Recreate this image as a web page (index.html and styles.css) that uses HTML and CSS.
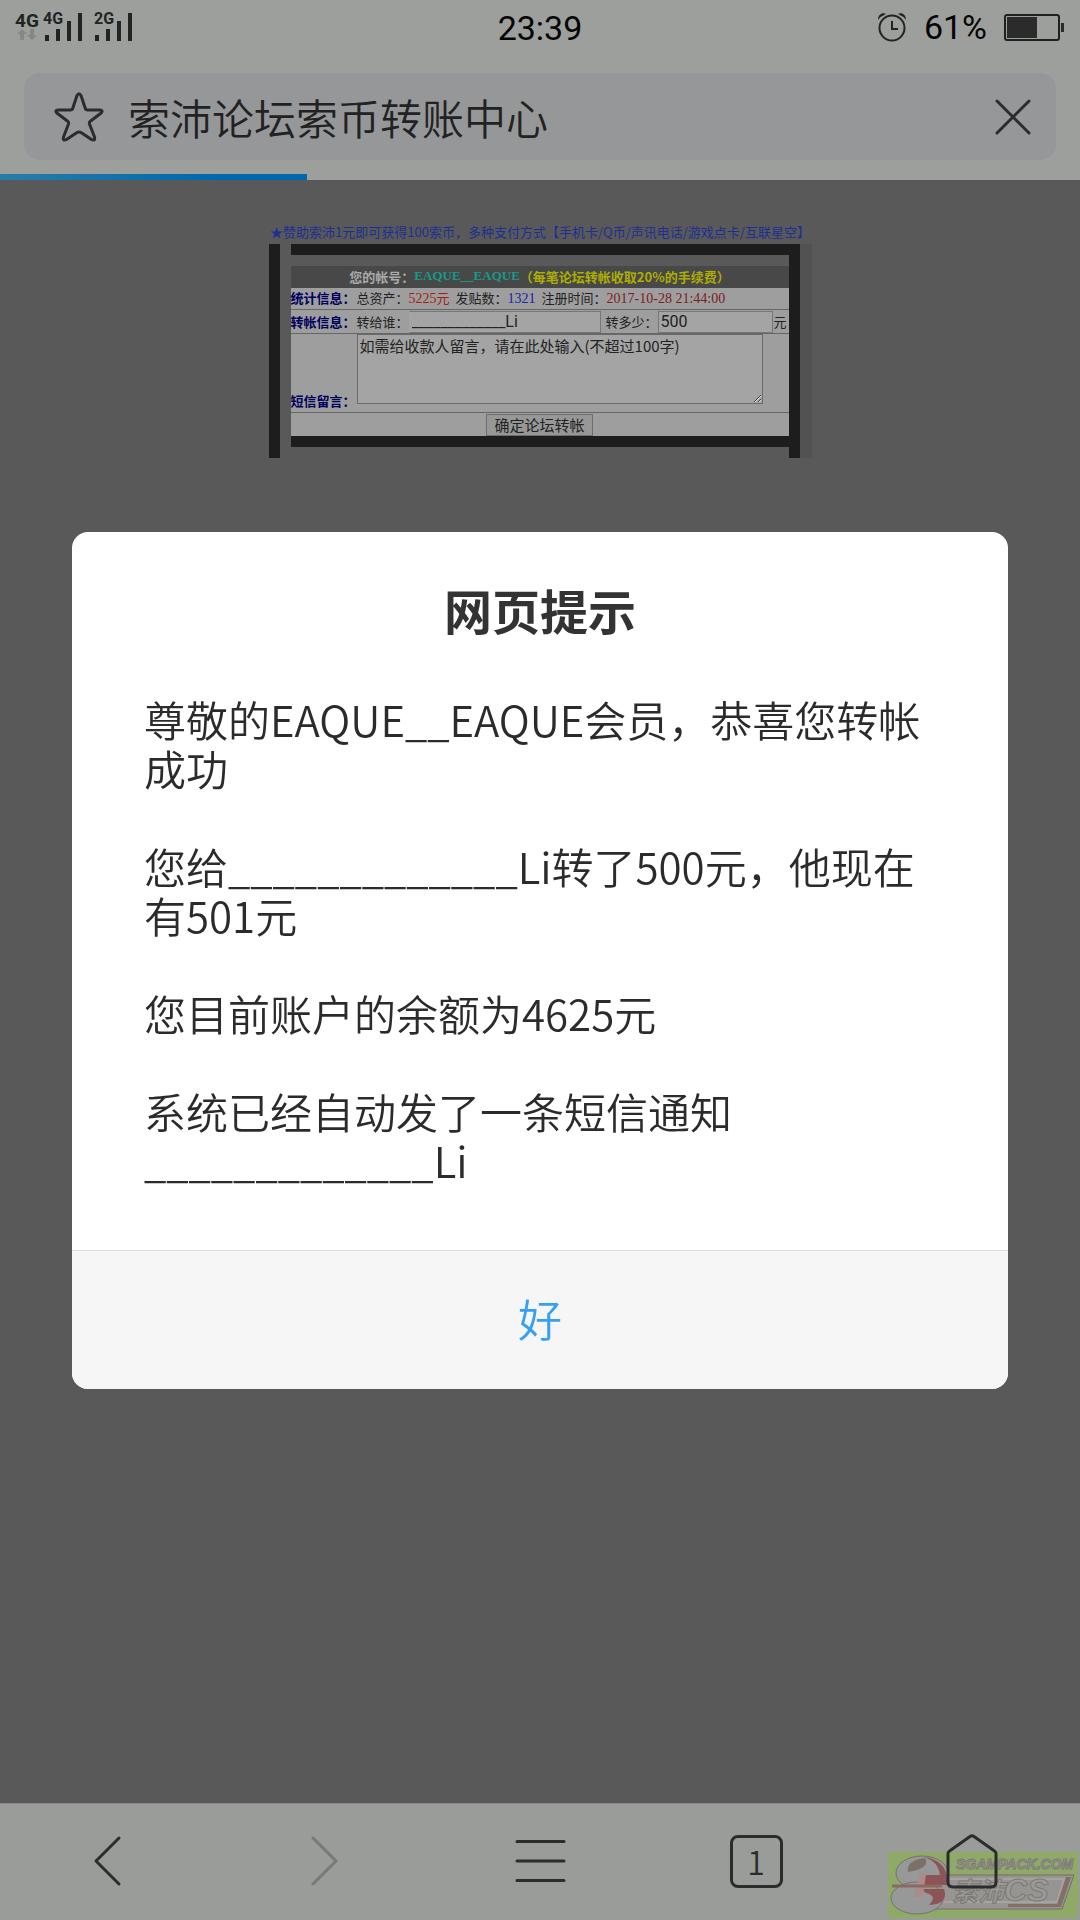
FILE: index.html
```html
<!DOCTYPE html>
<html lang="zh-CN">
<head>
<meta charset="utf-8">
<meta name="viewport" content="width=device-width, initial-scale=1">
<title>索沛论坛索币转账中心</title>
<link rel="stylesheet" href="styles.css">
</head>
<body>
<header class="top">
  <div class="status">
    <svg class="signal" width="120" height="32" viewBox="0 0 120 32" aria-label="信号">
      <g class="net">
        <text x="0" y="18" class="net-main">4G</text>
        <text x="28" y="15" class="net-sub">4G</text>
        <text x="79" y="15" class="net-sub">2G</text>
      </g>
      <path class="arrows" d="M7 20l5 5H9v6H5v-6H2zM17 31l5-5h-3v-6h-4v6h-3z"/>
      <path class="bars" d="M30 26h4v6h-4zM41 20h4v12h-4zM52 12h4v20h-4zM63 4h4v28h-4zM80 26h4v6h-4zM91 20h4v12h-4zM102 12h4v20h-4zM113 4h4v28h-4z"/>
    </svg>
    <time class="clock">23:39</time>
    <div class="power">
      <svg width="30" height="30" viewBox="0 0 30 30" aria-label="闹钟">
        <circle cx="15" cy="16" r="12.5" fill="none" stroke="#222423" stroke-width="2"/>
        <path d="M15 9v8h6" fill="none" stroke="#222423" stroke-width="2"/>
        <path d="M1 8C1 3 5 0 9 2Q4 4 1 8zM29 8C29 3 25 0 21 2Q26 4 29 8z" fill="#222423"/>
      </svg>
      <span class="percent">61%</span>
      <svg width="61" height="27" viewBox="0 0 61 27" aria-label="电量">
        <rect x="1" y="1" width="54" height="25" rx="2" fill="none" stroke="#1f2120" stroke-width="2"/>
        <path d="M3 3h30v21H3zM57 9h3v9h-3z" fill="#2b2b2b"/>
      </svg>
    </div>
  </div>
  <div class="address">
    <button class="icon-btn" aria-label="收藏">
      <svg width="50" height="50" viewBox="0 0 50 50"><path d="M23 3.500Q25 0 27 3.500L31.500 17Q32 18 33.500 18H46Q50 18.500 46.500 21.500L36 29.500Q35 30.500 35.500 32L40.500 45Q41.500 49.500 37.500 47.500L27 40.500Q25 39.500 23 40.500L12.500 47.500Q8.500 49.500 9.500 45L14.500 32Q15 30.500 14 29.500L3.500 21.500Q0 18.500 4 18H16.500Q18 18 18.500 17Z"/></svg>
    </button>
    <span class="page-title">索沛论坛索币转账中心</span>
    <button class="icon-btn" aria-label="停止">
      <svg width="38" height="38" viewBox="0 0 38 38"><path d="M3 3L35 35M35 3L3 35"/></svg>
    </button>
  </div>
  <div class="progress"><div class="progress-fill"></div></div>
</header>

<main class="page">
  <a class="promo" href="#">★赞助索沛1元即可获得100索币，多种支付方式【手机卡/Q币/声讯电话/游戏点卡/互联星空】</a>
  <div class="frame">
    <form class="panel">
      <div class="rule"></div>
      <div class="row heading">您的帐号：<span class="account">EAQUE__EAQUE</span><span class="fee">（每笔论坛转帐收取20%的手续费）</span></div>
      <div class="row stats">
        <b class="label">统计信息：</b>
        <span>总资产：<span class="num red">5225</span><span class="red">元</span></span>
        <span>发贴数：<span class="num blue">1321</span></span>
        <span>注册时间：<span class="num maroon">2017-10-28 21:44:00</span></span>
      </div>
      <div class="row">
        <b class="label">转帐信息：</b>
        <label for="to">转给谁：</label><input id="to" class="to" type="text" value="_____________Li">
        <label for="sum" class="sum-label">转多少：</label><input id="sum" class="sum" type="text" value="500"><span class="unit">元</span>
      </div>
      <div class="row message">
        <label class="label" for="msg">短信留言：</label><textarea id="msg">如需给收款人留言，请在此处输入(不超过100字)</textarea>
      </div>
      <div class="row submit"><button type="button" class="send">确定论坛转帐</button></div>
      <div class="rule"></div>
    </form>
  </div>
</main>

<nav class="toolbar">
  <button aria-label="后退"><svg width="54" height="56" viewBox="0 0 54 56"><path d="M38 5L15 28L38 51"/></svg></button>
  <button aria-label="前进" disabled><svg width="54" height="56" viewBox="0 0 54 56"><path d="M16 5L39 28L16 51"/></svg></button>
  <button aria-label="菜单"><svg width="54" height="56" viewBox="0 0 54 56"><path d="M4 8.500H51M4 28H51M4 47.500H51"/></svg></button>
  <button aria-label="标签页"><span class="tabs">1</span></button>
  <button class="home" aria-label="主页"><svg width="54" height="56" viewBox="0 0 54 56"><path d="M3 20.500Q3 19 4.500 18L25 3.500Q27 2 29 3.500L49.500 18Q51 19 51 20.500V49Q51 54 46 54H8Q3 54 3 49Z"/></svg></button>
</nav>

<svg class="watermark" width="190" height="66" viewBox="0 0 190 66" aria-hidden="true">
  <rect width="190" height="66" fill="#8fa968"/>
  <path d="M48 23H186L174 57H44Z" fill="#969593" stroke="#786c62"/>
  <path d="M52 27H176L169 50H56" fill="none" stroke="#a6a4a2" stroke-width="2"/>
  <path d="M178 25h5l-10 30H120v-3h49z" fill="#817065"/>
  <ellipse cx="34" cy="21" rx="26" ry="17" fill="#969997" stroke="#7a706b"/>
  <ellipse cx="29" cy="46" rx="26" ry="16" fill="#969997" stroke="#7a706b"/>
  <path d="M36 5Q60 8 60 33H34L38 23H52Q50 9 36 5ZM33 37H56Q61 52 41 53Q50 44 38 41Z" fill="#8c5454"/>
  <path d="M20 20Q18 8 37 6Q43 16 20 20Z" fill="#7d706b"/>
  <path d="M32 21H38L35 45H26Z" fill="#aa8b89"/>
  <path d="M4 34H54" stroke="#8c6866" stroke-width="3"/>
  <g class="mark">
    <text x="68" y="17" class="mark-url">SGAMPACK.COM</text>
    <text x="64" y="49" class="mark-name">索沛<tspan class="mark-cs">CS</tspan></text>
  </g>
</svg>

<div class="overlay">
  <section class="dialog" role="dialog" aria-modal="true" aria-labelledby="dlg-title">
    <div class="dialog-body">
      <h1 id="dlg-title">网页提示</h1>
      <p>尊敬的EAQUE<span class="pad">__</span>EAQUE会员，恭喜您转帐成功</p>
      <p>您给<span class="pad">_____________</span>Li转了500元，他现在有501元</p>
      <p>您目前账户的余额为4625元</p>
      <p>系统已经自动发了一条短信通知<br><span class="pad">_____________</span>Li</p>
    </div>
    <button class="ok">好</button>
  </section>
</div>
</body>
</html>
```
FILE: styles.css
```css
* { box-sizing: border-box; }

body {
  margin: 0;
  min-height: 100vh;
  display: flex;
  flex-direction: column;
  background: #595959;
  color: #2b2b2b;
  font-family: "Noto Sans CJK SC", "Noto Sans", sans-serif;
}

button, input, textarea { font: inherit; color: inherit; margin: 0; }
button { padding: 0; border: 0; background: none; display: grid; place-items: center; }

/* Status and address bars */
.top { background: #9d9f9d; }
.status {
  height: 73px;
  padding: 9px 15px 0;
  display: grid;
  grid-template-columns: 1fr auto 1fr;
  align-items: start;
}
.net { font-family: Roboto, sans-serif; font-weight: 700; fill: #222423; }
.net-main { font-size: 19px; }
.net-sub { font-size: 16px; }
.arrows { fill: #858785; }
.bars { fill: #222423; }
.clock, .percent { font: 34px/38px Roboto, sans-serif; color: #050505; }
.power { display: flex; justify-content: flex-end; align-items: center; gap: 17px; height: 36px; }

.address {
  height: 87px;
  margin: 0 24px;
  padding: 0 24px 0 30px;
  display: flex;
  align-items: center;
  gap: 24px;
  border-radius: 16px;
  background: #969799;
}
.icon-btn svg, .toolbar svg {
  fill: none;
  stroke: #2b2d2c;
  stroke-width: 3;
  stroke-linecap: round;
  stroke-linejoin: round;
}
.page-title { flex: 1; font-size: 42px; line-height: 60px; font-weight: 350; color: #222; }
.progress { height: 20px; padding-top: 14px; }
.progress-fill { width: 28.4%; height: 6px; background: linear-gradient(90deg, #2a7ca6, #0067ae 70%); }

/* Forum page */
.page {
  flex: 1;
  padding-top: 42px;
  display: flex;
  flex-direction: column;
  align-items: center;
  font-size: 13px;
  color: #222;
}
.promo {
  padding-bottom: 2px;
  line-height: 20px;
  color: #1f2f91;
  text-decoration: none;
  white-space: nowrap;
}
.frame {
  width: 543px;
  padding-right: 12px;
  background: #525252;
}
.panel {
  border: solid #1d1d1d;
  border-width: 0 11px;
  padding-left: 11px;
  background: #595959;
}
.rule { height: 11px; margin-bottom: 11px; background: #1d1d1d; }
.panel::after { content: ""; display: table; }
.row {
  height: 24px;
  display: flex;
  align-items: center;
  white-space: nowrap;
  background: #9e9e9e;
  border-bottom: 1px solid #666;
}
.row.heading {
  height: 22px;
  padding-bottom: 2px;
  border-bottom: 0;
  justify-content: center;
  font-weight: 700;
  color: #aaa;
  background: #484848;
}
.label { width: 66px; font-weight: 700; color: #00005c; }
.account { color: #159a8b; font-family: "Liberation Serif", serif; }
.fee { color: #aeae00; }
.num { font-family: "Liberation Serif", serif; font-size: 14px; }
.red { color: #a51a1a; }
.blue { color: #2020a0; }
.maroon { color: #7c2024; }
.row.stats { height: 22px; padding-bottom: 2px; gap: 6px; }
.stats .label { width: 60px; }
.row input {
  height: 22px;
  padding: 0 2px;
  border: 1px solid #777;
  background: #a4a4a4;
  font: 16px/20px Roboto, sans-serif;
}
.row .to { width: 192px; border-left-color: #a4a4a4; }
.sum-label { padding-left: 5px; }
.row .sum { width: 115px; }
.unit { padding-left: 1px; }
.row.message { height: 79px; align-items: flex-start; }
.message .label { align-self: flex-end; line-height: 22px; }
.message textarea {
  width: 406px;
  height: 70px;
  padding: 0 2px;
  border: 1px solid #6a6a6a;
  background: #a4a4a4;
  font-size: 15px;
  line-height: 22px;
}
.row.submit { height: 23px; justify-content: center; border-bottom: 0; }
.send {
  width: 107px;
  height: 22px;
  border: 1px solid #6e6e6e;
  background: #979797;
  font-size: 15px;
  line-height: 20px;
}

/* Bottom toolbar */
.toolbar {
  height: 117px;
  padding-bottom: 2px;
  display: grid;
  grid-template-columns: repeat(5, 1fr);
  background: #9a9c9a;
  border-top: 1px solid #868886;
}
.toolbar button:disabled { opacity: .3; }
.toolbar .home { position: relative; z-index: 2; }
.tabs {
  width: 53px;
  height: 53px;
  border: 3px solid #2b2d2c;
  border-radius: 8px;
  font-size: 32px;
  line-height: 46px;
  font-weight: 350;
}
.watermark { position: fixed; right: 2px; bottom: 2px; z-index: 1; }
.mark { font-style: italic; font-weight: 700; fill: #9b9a96; stroke: #7d7a74; stroke-width: 1px; }
.mark-url { font-family: "Liberation Sans", sans-serif; font-size: 14px; }
.mark-name { font-family: "Liberation Sans", "Noto Sans CJK SC", sans-serif; font-size: 26px; }
.mark-cs { font-size: 32px; }

/* Alert dialog */
.overlay { position: fixed; inset: 0; padding: 0 72px; display: grid; align-items: center; }
.dialog { background: #fff; border-radius: 16px; overflow: hidden; }
.dialog-body {
  padding: 41px 72px 66px;
  font-size: 42px;
  line-height: 49px;
  font-weight: 350;
}
.dialog h1 {
  margin: 0 0 49px;
  text-align: center;
  font-size: 48px;
  line-height: 72px;
  font-weight: 700;
  color: #333;
}
.dialog p { margin: 0 0 49px; }
.dialog p:last-child { margin: 0; }
.pad { font-size: 40px; line-height: 1; }
.ok {
  width: 100%;
  height: 139px;
  padding-bottom: 4px;
  border-top: 1px solid #ddd;
  background: #f6f6f6;
  color: #38a0f4;
  font-size: 44px;
  font-weight: 350;
}
```
